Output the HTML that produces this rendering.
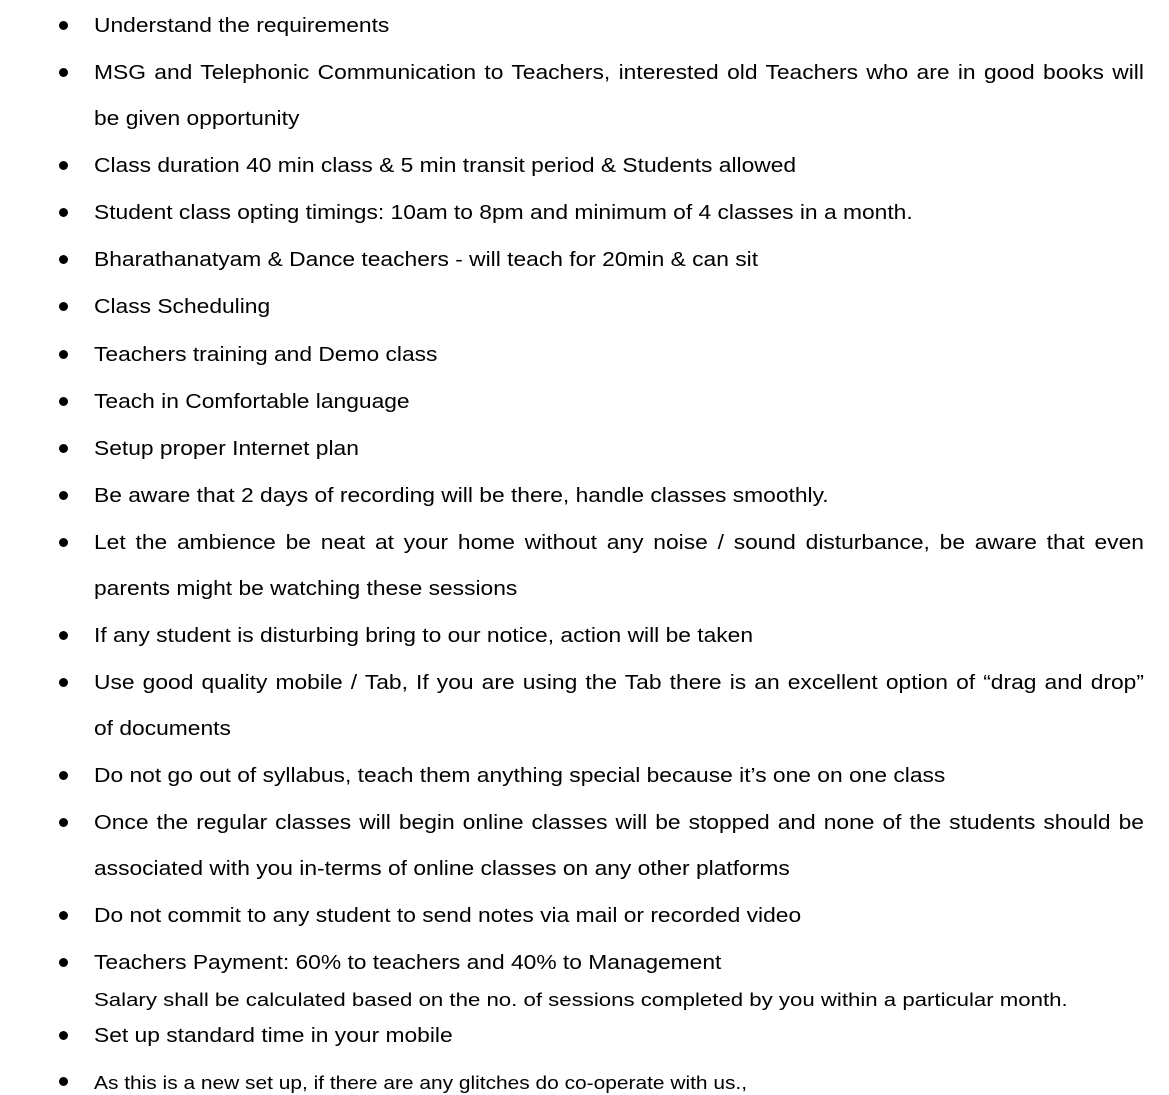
<!DOCTYPE html>
<html><head><meta charset="utf-8"><style>
body{margin:0;width:1169px;height:1095px;background:#fff;position:relative;overflow:hidden;font-family:"Liberation Sans",Arial,sans-serif;color:#000}
.l{position:absolute;left:94px;font-size:20px;line-height:24px;white-space:nowrap;transform:scaleX(1.14);transform-origin:0 0;margin-top:1px}
.j{width:921px;text-align:justify;text-align-last:justify;white-space:normal}
.s{font-size:18.5px}
.b{position:absolute;left:59px;width:9px;height:9px;border-radius:50%;background:#000}
</style></head><body>
<div class="b" style="top:21px"></div><div class="l" style="top:13px">Understand the requirements</div>
<div class="b" style="top:68px"></div><div class="l j" style="top:60px">MSG and Telephonic Communication to Teachers, interested old Teachers who are in good books will</div>
<div class="l" style="top:106px">be given opportunity</div>
<div class="b" style="top:161px"></div><div class="l" style="top:153px">Class duration 40 min class &amp; 5 min transit period &amp; Students allowed</div>
<div class="b" style="top:208px"></div><div class="l" style="top:200px">Student class opting timings: 10am to 8pm and minimum of 4 classes in a month.</div>
<div class="b" style="top:255px"></div><div class="l" style="top:247px">Bharathanatyam &amp; Dance teachers - will teach for 20min &amp; can sit</div>
<div class="b" style="top:302px"></div><div class="l" style="top:294px">Class Scheduling</div>
<div class="b" style="top:350px"></div><div class="l" style="top:342px">Teachers training and Demo class</div>
<div class="b" style="top:397px"></div><div class="l" style="top:389px">Teach in Comfortable language</div>
<div class="b" style="top:444px"></div><div class="l" style="top:436px">Setup proper Internet plan</div>
<div class="b" style="top:491px"></div><div class="l" style="top:483px">Be aware that 2 days of recording will be there, handle classes smoothly.</div>
<div class="b" style="top:538px"></div><div class="l j" style="top:530px">Let the ambience be neat at your home without any noise / sound disturbance, be aware that even</div>
<div class="l" style="top:576px">parents might be watching these sessions</div>
<div class="b" style="top:631px"></div><div class="l" style="top:623px">If any student is disturbing bring to our notice, action will be taken</div>
<div class="b" style="top:678px"></div><div class="l j" style="top:670px">Use good quality mobile / Tab, If you are using the Tab there is an excellent option of “drag and drop”</div>
<div class="l" style="top:716px">of documents</div>
<div class="b" style="top:771px"></div><div class="l" style="top:763px">Do not go out of syllabus, teach them anything special because it’s one on one class</div>
<div class="b" style="top:818px"></div><div class="l j" style="top:810px">Once the regular classes will begin online classes will be stopped and none of the students should be</div>
<div class="l" style="top:856px">associated with you in-terms of online classes on any other platforms</div>
<div class="b" style="top:911px"></div><div class="l" style="top:903px">Do not commit to any student to send notes via mail or recorded video</div>
<div class="b" style="top:958px"></div><div class="l" style="top:950px">Teachers Payment: 60% to teachers and 40% to Management</div>
<div class="l s" style="top:987px;transform:scaleX(1.2)">Salary shall be calculated based on the no. of sessions completed by you within a particular month.</div>
<div class="b" style="top:1031px"></div><div class="l" style="top:1023px">Set up standard time in your mobile</div>
<div class="b" style="top:1077px"></div><div class="l s" style="top:1070px;transform:scaleX(1.13)">As this is a new set up, if there are any glitches do co-operate with us.,</div>
</body></html>
